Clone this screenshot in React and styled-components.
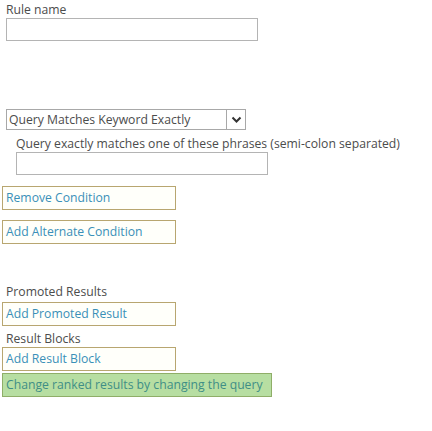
import React from 'react';
import styled, { createGlobalStyle } from 'styled-components';

const GlobalStyle = createGlobalStyle`
  body {
    margin: 0;
    background: #fff;
    font-family: "Open Sans", "Liberation Sans", sans-serif;
    font-size: 12.2px;
    color: #4c4c4c;
  }
`;

const Page = styled.div`
  width: 432px;
  height: 431px;
  padding: 2px 0 0 2px;
  box-sizing: border-box;
  display: flex;
  flex-direction: column;
`;

const Label = styled.div`
  height: 16px;
  line-height: 16px;
  margin-top: ${p => p.$top || 0}px;
  padding-left: ${p => p.$indent || 4}px;
  color: #4c4c4c;
  white-space: nowrap;
`;

const TextBox = styled.div`
  margin-left: ${p => p.$indent || 4}px;
  width: ${p => p.$width}px;
  height: 23px;
  box-sizing: border-box;
  border: 1px solid #b4b4b4;
  background: #fff;
`;

const Select = styled.div`
  margin: ${p => p.$top}px 0 0 4px;
  width: 240px;
  height: 21px;
  box-sizing: border-box;
  border: 1px solid #a8a8a8;
  display: flex;
  align-items: center;
  justify-content: space-between;
  padding-left: 2px;
  color: #4c4c4c;
`;

const Arrow = styled.div`
  width: 19px;
  height: 19px;
  box-sizing: border-box;
  border-left: 1px solid #a8a8a8;
  display: flex;
  align-items: center;
  justify-content: center;
`;

const LinkButton = styled.div`
  margin-top: ${p => p.$top || 0}px;
  width: ${p => p.$width || 174}px;
  height: 24px;
  box-sizing: border-box;
  border: 1px solid ${p => (p.$green ? '#8fae68' : '#b8a670')};
  background: ${p => (p.$green ? '#b7dea2' : '#fffffa')};
  color: ${p => (p.$green ? '#3f8e86' : '#3a90b8')};
  padding-left: 3px;
  line-height: 21px;
  white-space: nowrap;
`;

export default function App() {
  return (
    <Page>
      <GlobalStyle />
      <Label>Rule name</Label>
      <TextBox $width={252} />
      <Select $top={68}>
        <span>Query Matches Keyword Exactly</span>
        <Arrow>
          <svg width="11" height="8" viewBox="0 0 11 8">
            <path d="M1.5 1.5 L5.5 5.5 L9.5 1.5" fill="none" stroke="#333" strokeWidth="2" />
          </svg>
        </Arrow>
      </Select>
      <Label $indent={14} $top={6}>
        Query exactly matches one of these phrases (semi-colon separated)
      </Label>
      <TextBox $indent={14} $width={252} />
      <LinkButton $top={11}>Remove Condition</LinkButton>
      <LinkButton $top={10}>Add Alternate Condition</LinkButton>
      <Label $top={40}>Promoted Results</Label>
      <LinkButton $top={2}>Add Promoted Result</LinkButton>
      <Label $top={5}>Result Blocks</Label>
      <LinkButton>Add Result Block</LinkButton>
      <LinkButton $top={2} $width={270} $green>
        Change ranked results by changing the query
      </LinkButton>
    </Page>
  );
}
